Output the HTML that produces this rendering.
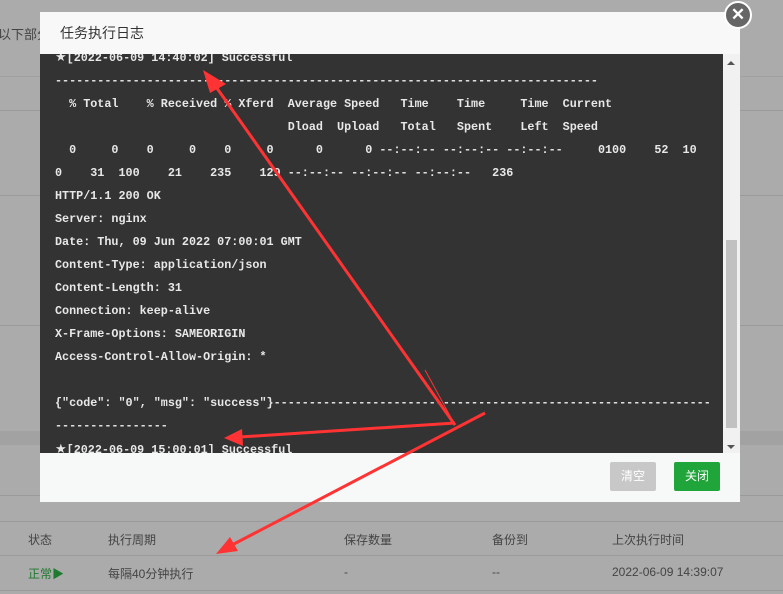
<!DOCTYPE html>
<html><head><meta charset="utf-8"><style>
body{margin:0;width:783px;height:594px;background:#ababab;position:relative;overflow:hidden;font-family:"Liberation Sans","Noto Sans CJK SC",sans-serif;}
.hl{position:absolute;left:0;width:783px;height:1px;background:#9a9a9a}
.t{position:absolute;font-size:12px;color:#444;}
#dlg{position:absolute;left:40px;top:12px;width:700px;height:490px;background:#f7f8f8;}
#hd{position:absolute;left:0;top:0;width:700px;height:42px;background:#f8f8f8;font-size:14px;color:#333;line-height:42px;text-indent:20px}
#log{position:absolute;left:0;top:42px;width:683px;height:399px;background:#333;overflow:hidden}
#sb{position:absolute;left:683px;top:42px;width:17px;height:399px;background:#f1f1f1}
pre{margin:0;position:absolute;left:15px;top:-8px;font-family:"Liberation Mono",monospace;font-size:11.75px;line-height:23px;color:#e8e8e8;font-weight:bold;}
.st{font-family:"DejaVu Sans",sans-serif;font-size:13px;}
.btn{position:absolute;top:450px;height:29px;width:46px;line-height:29px;text-align:center;font-size:12px;color:#fff;border-radius:2px}
</style></head><body>
<div class="t" style="left:-2px;top:24px;font-size:13px">以下部分</div>
<div class="hl" style="top:76px;background:#a0a0a0"></div>
<div class="hl" style="top:110px"></div>
<div class="hl" style="top:195px"></div>
<div class="hl" style="top:325px"></div>
<div style="position:absolute;left:0;top:431px;width:783px;height:14px;background:#a2a2a2"></div>
<div class="hl" style="top:495px"></div>
<div class="hl" style="top:521px"></div>
<div class="hl" style="top:555px"></div>
<div class="hl" style="top:590px"></div>
<div class="t" style="left:28px;top:531px">状态</div>
<div class="t" style="left:108px;top:531px">执行周期</div>
<div class="t" style="left:344px;top:531px">保存数量</div>
<div class="t" style="left:492px;top:531px">备份到</div>
<div class="t" style="left:612px;top:531px">上次执行时间</div>
<div class="t" style="left:28px;top:565px;color:#1e7a2e">正常▶</div>
<div class="t" style="left:108px;top:565px">每隔40分钟执行</div>
<div class="t" style="left:344px;top:565px">-</div>
<div class="t" style="left:492px;top:565px">--</div>
<div class="t" style="left:612px;top:565px">2022-06-09 14:39:07</div>
<div id="dlg">
<div id="hd">任务执行日志</div>
<div id="log"><pre><span class="st">★</span>[2022-06-09 14:40:02] Successful
-----------------------------------------------------------------------------
  % Total    % Received % Xferd  Average Speed   Time    Time     Time  Current
                                 Dload  Upload   Total   Spent    Left  Speed
  0     0    0     0    0     0      0      0 --:--:-- --:--:-- --:--:--     0100    52  10
0    31  100    21    235    129 --:--:-- --:--:-- --:--:--   236
HTTP/1.1 200 OK
Server: nginx
Date: Thu, 09 Jun 2022 07:00:01 GMT
Content-Type: application/json
Content-Length: 31
Connection: keep-alive
X-Frame-Options: SAMEORIGIN
Access-Control-Allow-Origin: *

{"code": "0", "msg": "success"}--------------------------------------------------------------
----------------
<span class="st">★</span>[2022-06-09 15:00:01] Successful</pre></div>
<div id="sb"><div style="position:absolute;left:3px;top:186px;width:11px;height:188px;background:#c1c1c1"></div>
<div style="position:absolute;left:4px;top:7px;border:4px solid transparent;border-bottom:4px solid #555;border-top:0"></div>
<div style="position:absolute;left:4px;top:391px;border:4px solid transparent;border-top:4px solid #555;border-bottom:0"></div></div>
<div class="btn" style="left:570px;background:#c8c8c8">清空</div>
<div class="btn" style="left:634px;background:#20a53a">关闭</div>
</div>
<div style="position:absolute;left:724px;top:1px;width:24px;height:24px;border-radius:50%;background:#666;border:2px solid #fff;color:#fff;font-size:17px;line-height:24px;text-align:center;font-weight:bold">✕</div>
<svg width="783" height="594" style="position:absolute;left:0;top:0">
<g fill="#f33" stroke="#f33">
<line x1="455" y1="425" x2="214" y2="84" stroke-width="3"/>
<polygon points="203,70 226,84 210,93" stroke="none"/>
<line x1="455" y1="423" x2="240" y2="437" stroke-width="3"/>
<polygon points="224,438 242,429 243,446" stroke="none"/>
<line x1="485" y1="413" x2="232" y2="545" stroke-width="3"/>
<polygon points="216,554 230,537 238,551" stroke="none"/>
<line x1="425" y1="370" x2="455" y2="425" stroke-width="1"/>
</g></svg>
</body></html>
